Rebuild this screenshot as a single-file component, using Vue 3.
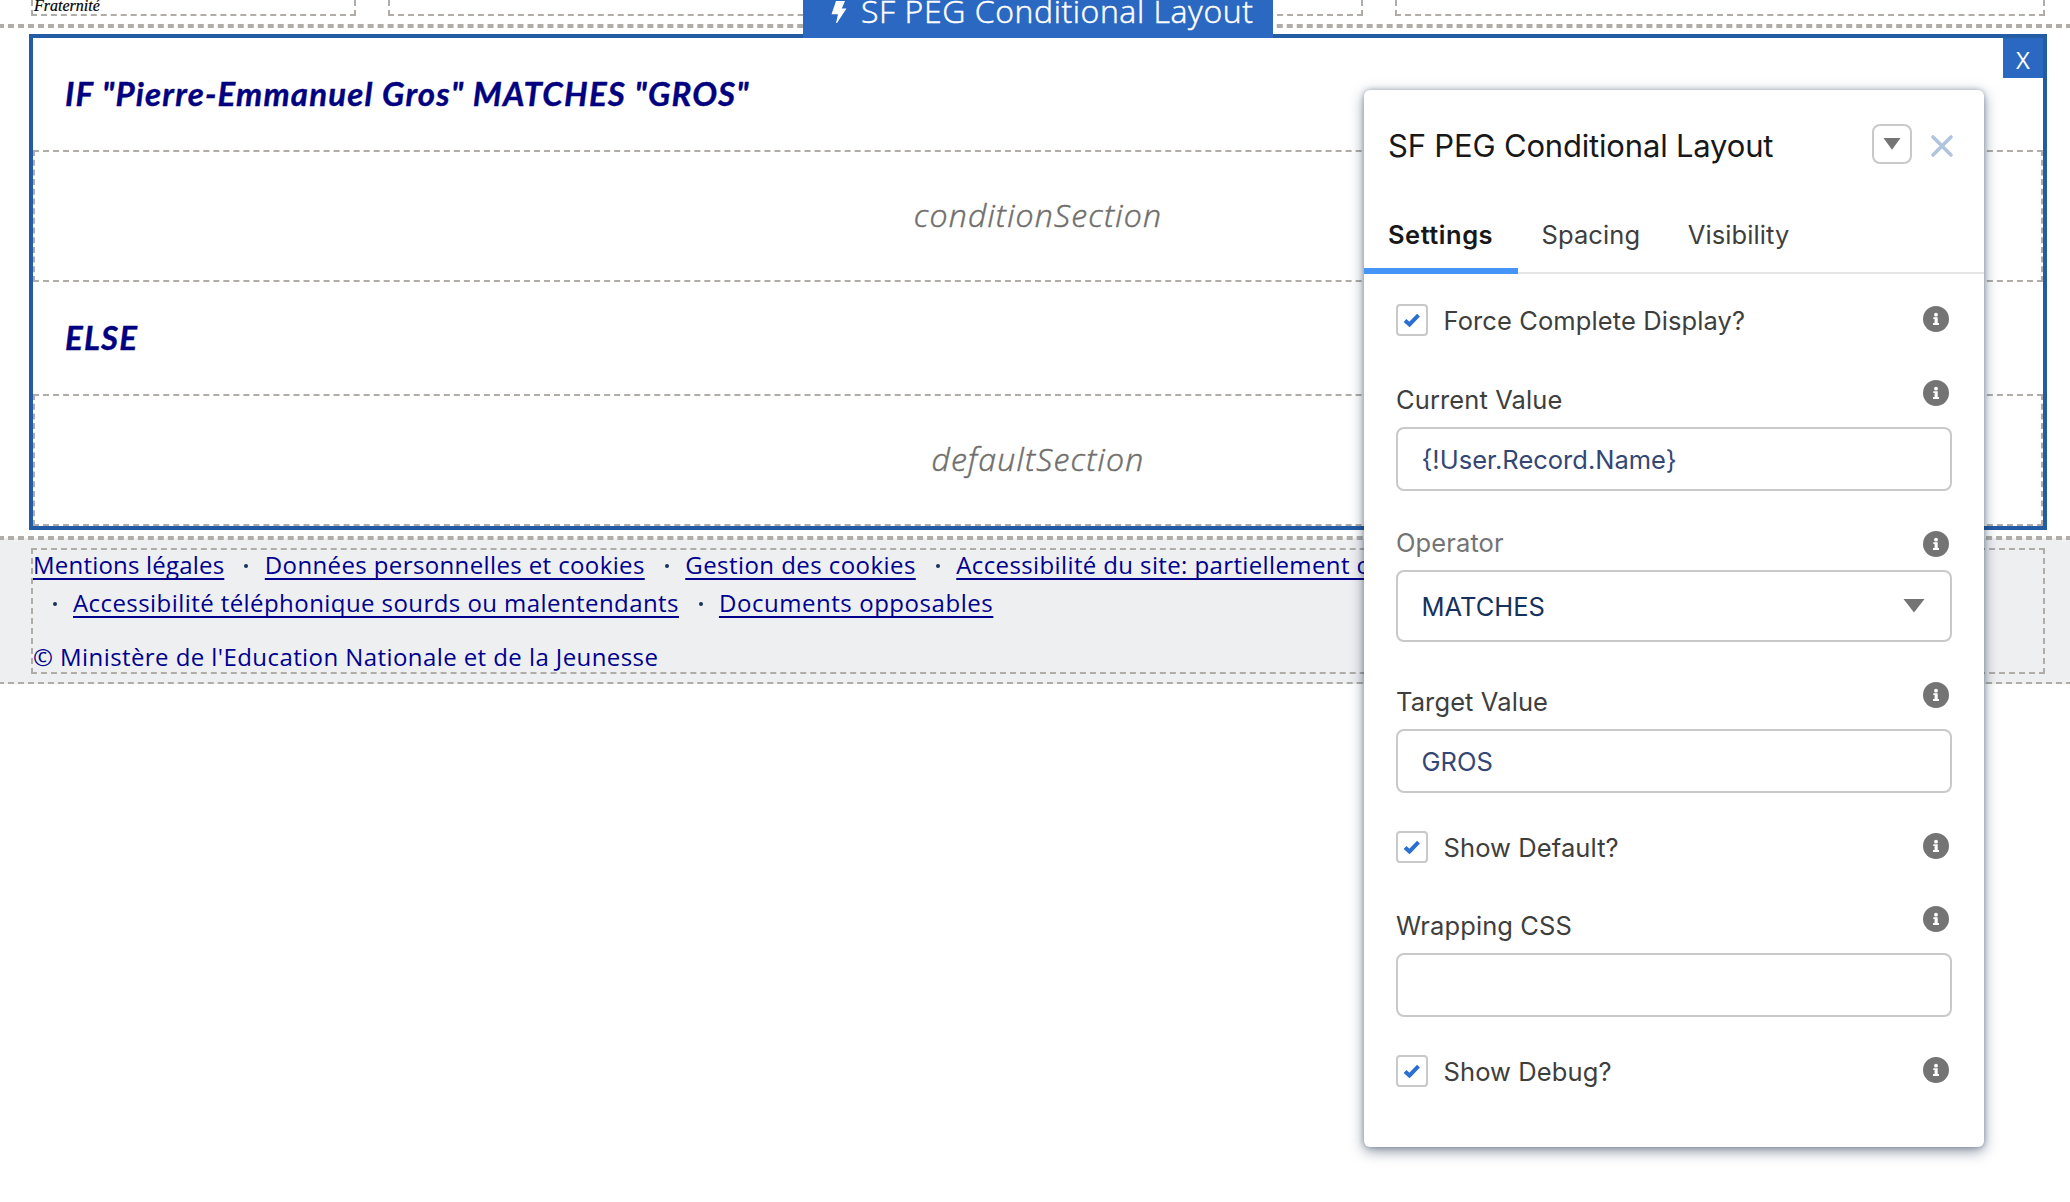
<script setup>
const footerRows = [
  [
    { label: 'Mentions légales', spacing: 0.2 },
    { label: 'Données personnelles et cookies', spacing: 0.38 },
    { label: 'Gestion des cookies', spacing: 0.44 },
    { label: 'Accessibilité du site: partiellement conforme', spacing: 0.38 },
  ],
  [
    { label: 'Accessibilité téléphonique sourds ou malentendants', spacing: 0.43 },
    { label: 'Documents opposables', spacing: 0.55 },
  ],
]

const fields = [
  { type: 'check', label: 'Force Complete Display?' },
  { type: 'text', label: 'Current Value', value: '{!User.Record.Name}' },
  { type: 'select', label: 'Operator', value: 'MATCHES' },
  { type: 'text', label: 'Target Value', value: 'GROS' },
  { type: 'check', label: 'Show Default?' },
  { type: 'text', label: 'Wrapping CSS', value: '' },
  { type: 'check', label: 'Show Debug?' },
]
</script>

<template>
  <div class="page">
    <header class="band band-top">
      <div class="col col-a"><span class="motto">Fraternité</span></div>
      <div class="col col-b"></div>
      <div class="col col-c"></div>
    </header>

    <main class="band band-main">
      <div class="component">
        <div class="tag">
          <svg class="bolt" viewBox="0 0 16 22" width="16" height="22">
            <path d="M5 0H14L10.800 7.500H15.500L6 22H5L7 13.200H.5Z" fill="#fff" />
          </svg>
          <span>SF PEG Conditional Layout</span>
        </div>
        <div class="remove">X</div>
        <div class="rule">IF "Pierre-Emmanuel Gros" MATCHES "GROS"</div>
        <div class="slot">conditionSection</div>
        <div class="rule">ELSE</div>
        <div class="slot">defaultSection</div>
      </div>
    </main>

    <footer class="band band-footer">
      <div class="footer-inner">
        <div v-for="(row, r) in footerRows" :key="r" class="links">
          <template v-for="(link, i) in row" :key="link.label">
            <i v-if="r > 0 || i > 0" class="dot"></i>
            <a class="link" :style="{ letterSpacing: link.spacing + 'px' }">{{ link.label }}</a>
          </template>
        </div>
        <p class="copyright">© Ministère de l'Education Nationale et de la Jeunesse</p>
      </div>
    </footer>

    <aside class="panel">
      <div class="panel-head">
        <h2>SF PEG Conditional Layout</h2>
        <button class="menu">
          <svg viewBox="0 0 18 12" width="18" height="12"><path d="M.5 0H17.500L9 11.800Z" fill="#747474" /></svg>
        </button>
        <svg class="close" viewBox="0 0 24 24" width="24" height="24">
          <path d="M3 3L21 21M21 3L3 21" stroke="#b0c4df" stroke-width="3.600" stroke-linecap="round" />
        </svg>
      </div>
      <nav class="tabs">
        <span class="tab active">Settings</span>
        <span class="tab">Spacing</span>
        <span class="tab">Visibility</span>
      </nav>
      <div class="fields">
        <div v-for="f in fields" :key="f.label" class="field" :class="f.type">
          <div class="field-head">
            <span v-if="f.type === 'check'" class="box">
              <svg viewBox="0 0 18 14" width="18" height="14">
                <path d="M2 7.500L6.500 11.500L15.500 2.200" fill="none" stroke="#2b6fd0" stroke-width="4" />
              </svg>
            </span>
            <span class="label">{{ f.label }}</span>
            <svg class="info" viewBox="0 0 26 26" width="26" height="26">
              <circle cx="13" cy="13" r="13" fill="#747474" />
              <circle cx="13" cy="8.700" r="1.900" fill="#fff" />
              <path d="M10.300 11.300H14.700V17H16V19H10V17H11.600V13.100H10.300Z" fill="#fff" />
            </svg>
          </div>
          <div v-if="f.type !== 'check'" class="input">
            <span>{{ f.value }}</span>
            <svg v-if="f.type === 'select'" viewBox="0 0 22 14" width="22" height="14">
              <path d="M.5 0H21.500L11 13.500Z" fill="#747474" />
            </svg>
          </div>
        </div>
      </div>
    </aside>
  </div>
</template>

<style>
body {
  margin: 0;
  background: #fff;
}
</style>

<style scoped>
.page {
  position: relative;
  width: 2070px;
  height: 1202px;
  overflow: hidden;
  background: #fff;
  font-family: 'Open Sans', 'Noto Sans', sans-serif;
}
.page * {
  box-sizing: border-box;
}
.band {
  margin: 0 -2px;
  padding: 0 33px;
  border: 0 dashed #b0ada8;
}
.band-top {
  display: flex;
  gap: 32px;
  height: 26px;
  padding: 0 27px 8px 33px;
  border-bottom-width: 2px;
}
.col {
  height: 46px;
  margin-top: -30px;
  border: 2px dashed #b0ada8;
}
.col-a {
  width: 325px;
  padding-top: 26px;
}
.col-b {
  width: 975px;
}
.col-c {
  width: 650px;
}
.motto {
  display: block;
  padding-left: 1px;
  font: italic 16px/16px 'Liberation Serif', serif;
  color: #000;
  -webkit-text-stroke: 0.2px #000;
}
.band-main {
  height: 512px;
  padding: 6px 25px 6px 31px;
  border-width: 2px 0;
}
.component {
  position: relative;
  height: 496px;
  border: 4px solid #235ba5;
}
.tag {
  position: absolute;
  left: 770px;
  top: -55px;
  width: 470px;
  height: 55px;
  display: flex;
  align-items: center;
  padding-left: 29px;
  background: #2b68c2;
  color: #fff;
  font-size: 32px;
  font-weight: 300;
  letter-spacing: 0.58px;
  line-height: 55px;
  white-space: nowrap;
  -webkit-text-stroke: 0.5px #fff;
}
.bolt {
  margin: 3px 14px 0 -1px;
}
.remove {
  position: absolute;
  right: 0;
  top: 0;
  width: 40px;
  height: 40px;
  background: #2b68c2;
  color: #fff;
  font-size: 24px;
  line-height: 44px;
  text-align: center;
}
.rule {
  height: 112px;
  padding-left: 32px;
  font-family: Lato, sans-serif;
  font-size: 33px;
  font-style: italic;
  font-weight: 700;
  letter-spacing: 1.2px;
  line-height: 110px;
  color: #000080;
  -webkit-text-stroke: 0.4px #000080;
}
.slot {
  height: 132px;
  border: 2px dashed #b0ada8;
  font-size: 32px;
  font-style: italic;
  font-weight: 300;
  letter-spacing: 1.2px;
  line-height: 125px;
  text-align: center;
  color: #706e6b;
  -webkit-text-stroke: 0.5px #706e6b;
}
.band-footer {
  height: 146px;
  padding: 8px 27px 8px 33px;
  border-width: 2px 0;
  background: #eeeff1;
}
.footer-inner {
  height: 126px;
  border: 2px dashed #b0ada8;
  font-size: 24px;
  color: #00008f;
}
.links {
  display: flex;
  align-items: center;
  height: 38px;
  margin-top: -4px;
  line-height: 38px;
  white-space: nowrap;
}
.links + .links {
  margin-top: 0;
}
.link {
  text-decoration: underline;
  text-decoration-thickness: 2px;
  text-decoration-skip-ink: none;
  text-underline-offset: 4px;
}
.dot {
  width: 4px;
  height: 4px;
  margin: 1px 16.5px 0 20px;
  border-radius: 50%;
  background: #16325c;
}
.links + .links .dot {
  margin-right: 16px;
}
.copyright {
  margin: 16px 0 0;
  font-size: 24px;
  letter-spacing: 0.42px;
  line-height: 38px;
  white-space: nowrap;
}
.panel {
  position: absolute;
  left: 1364px;
  top: 90px;
  width: 620px;
  height: 1057px;
  border-radius: 6px;
  background: #fff;
  box-shadow: 0 4px 14px rgba(20, 40, 70, 0.5), 0 0 5px rgba(20, 40, 70, 0.3);
  font-family: Inter, 'Liberation Sans', sans-serif;
  font-size: 25.5px;
  letter-spacing: 0.1px;
  color: #3e3e3c;
}
.panel-head {
  display: flex;
  align-items: center;
  height: 108px;
  padding: 0 30px 0 24px;
}
h2 {
  flex: 1;
  margin: 4px 0 0;
  font-size: 31px;
  font-weight: 400;
  letter-spacing: -0.18px;
  line-height: 40px;
  color: #181818;
}
.menu {
  display: flex;
  align-items: center;
  justify-content: center;
  width: 40px;
  height: 40px;
  padding: 0;
  border: 2px solid #c9c9c9;
  border-radius: 8px;
  background: #fff;
}
.close {
  margin: 4px 0 0 18px;
}
.tabs {
  display: flex;
  height: 76px;
  border-bottom: 2px solid #e5e5e5;
}
.tab {
  height: 76px;
  padding: 0 24px 0 23.5px;
  line-height: 74px;
}
.tab.active {
  width: 154px;
  padding: 0 0 0 24px;
  border-bottom: 6px solid #4594f8;
  font-weight: 600;
  letter-spacing: 0.5px;
  color: #181818;
}
.fields {
  padding: 30px 32px 0;
}
.field-head {
  display: flex;
  height: 47px;
}
.label {
  flex: 1;
  line-height: 40px;
}
.select .label {
  margin-top: -8px;
  color: #747474;
}
.select .field-head {
  height: 39px;
}
.info {
  margin-right: 3px;
}
.check .field-head {
  height: 32px;
}
.check .label {
  line-height: 34px;
}
.check .info {
  margin-top: 2px;
}
.box {
  display: flex;
  align-items: center;
  justify-content: center;
  width: 32px;
  height: 32px;
  margin-right: 15.5px;
  border: 2px solid #c9c9c9;
  border-radius: 4px;
}
.input {
  display: flex;
  align-items: center;
  justify-content: space-between;
  height: 64px;
  padding: 0 25px 0 23.5px;
  border: 2px solid #c9c9c9;
  border-radius: 8px;
  letter-spacing: 0;
  color: #344774;
}
.select .input {
  height: 72px;
  color: #16325c;
}
.check + .text {
  margin-top: 43px;
}
.check:first-child + .text {
  margin-top: 44px;
}
.text + .select,
.select + .text {
  margin-top: 40px;
}
.text + .check {
  margin-top: 38px;
}
</style>
